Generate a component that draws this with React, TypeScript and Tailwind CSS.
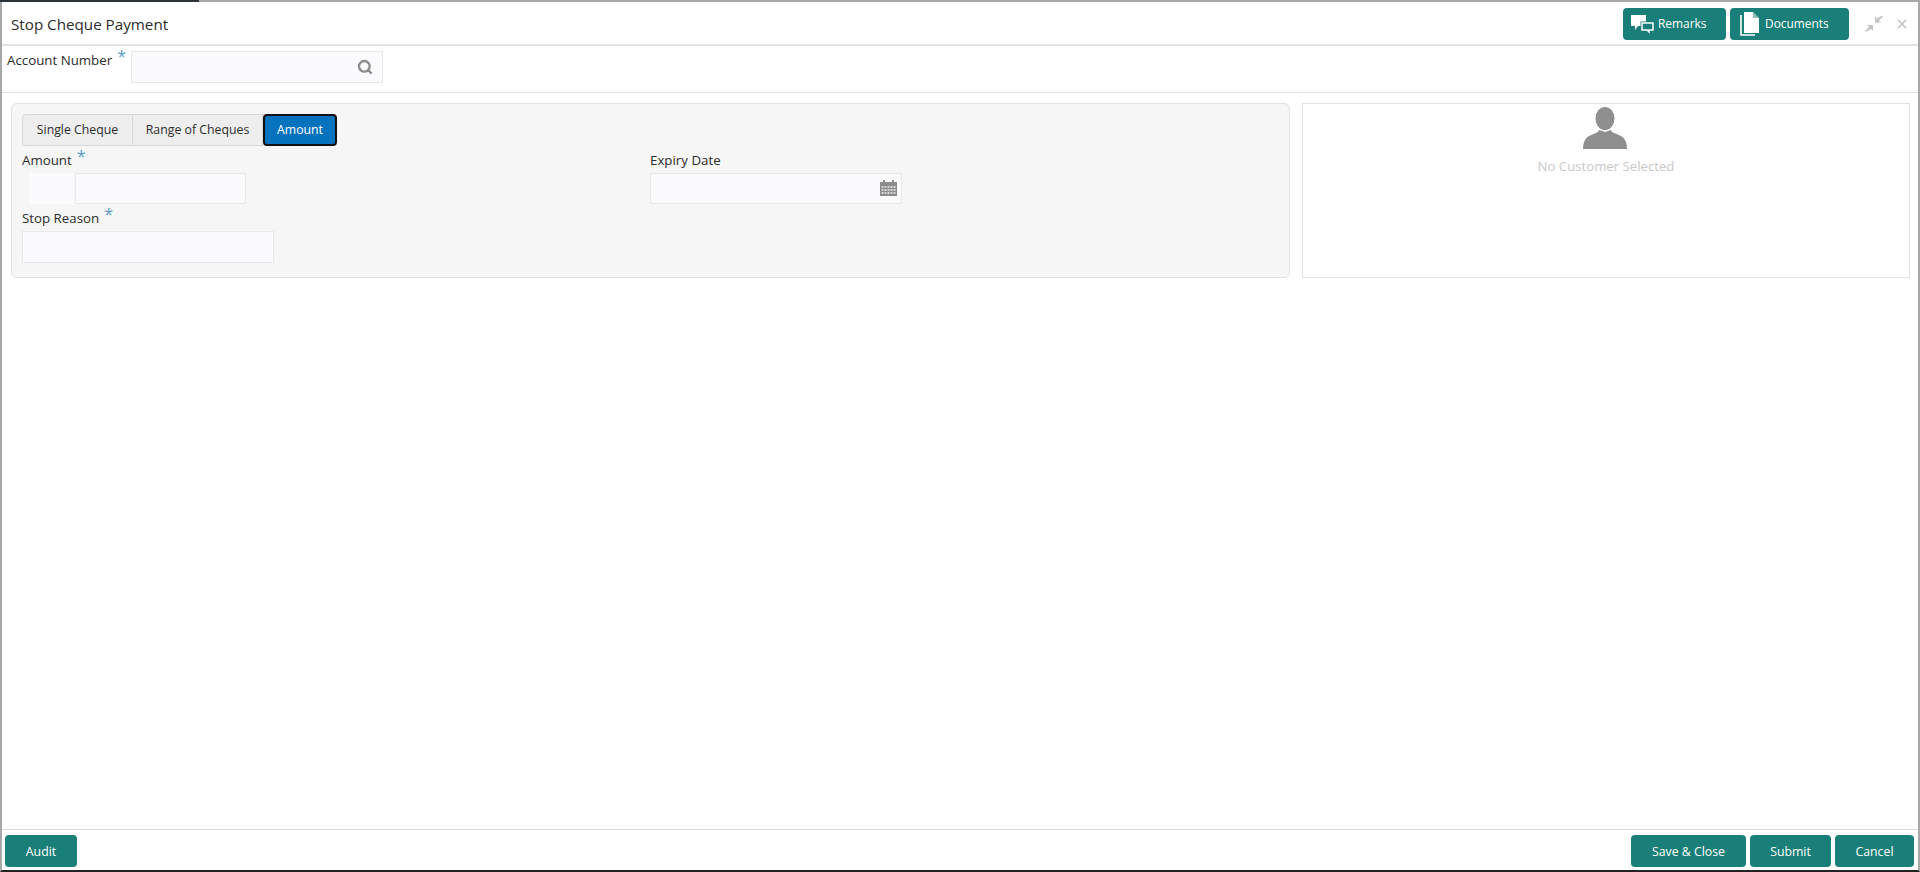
import { Search, X } from "lucide-react";

const font = { fontFamily: '"Open Sans", "Noto Sans", sans-serif' };

function RemarksIcon() {
  return (
    <svg width="24" height="20" viewBox="0 0 24 20" fill="none">
      <path d="M0 1h15v11H7l-3 4v-4H0z" fill="#fff" />
      <path d="M9.5 7.5h14v10h-4v2.5l-3-2.5h-7z" fill="#1a7f78" />
      <path d="M11 9h11v7h-4v2l-2-2h-5z" stroke="#fff" strokeWidth="1.5" />
    </svg>
  );
}

function DocumentsIcon() {
  return (
    <svg width="19" height="24" viewBox="0 0 19 24" fill="none">
      <path d="M4 0h9l6 6v15H4z" fill="#fff" />
      <path d="M13 0v6h6z" fill="#1a7f78" opacity="0.5" />
      <path d="M1 3v20h14" stroke="#fff" strokeWidth="1.6" />
    </svg>
  );
}

function CompressIcon() {
  return (
    <svg width="18" height="18" viewBox="0 0 18 18" fill="#c4c4c4">
      <path d="M17 0.5l1 1-4 4 2 2h-6v-6l2 2z" />
      <path d="M0.5 17l-0.5-1 4-4-2-2h6v6l-2-2z" />
    </svg>
  );
}

function CalendarIcon() {
  return (
    <svg width="17" height="16" viewBox="0 0 17 16" fill="#8c8c8c">
      <path d="M3 0h2v2h7V0h2v2h3v14H0V2h3z" />
      <path d="M1.5 6h2v2h-2zM4.5 6h2v2h-2zM7.5 6h2v2h-2zM10.5 6h2v2h-2zM13.5 6h2v2h-2zM1.5 9h2v2h-2zM4.5 9h2v2h-2zM7.5 9h2v2h-2zM10.5 9h2v2h-2zM13.5 9h2v2h-2zM1.5 12h2v2h-2zM4.5 12h2v2h-2zM7.5 12h2v2h-2zM10.5 12h2v2h-2zM13.5 12h2v2h-2z" fill="#d4d4d4" />
    </svg>
  );
}

function PersonIcon() {
  return (
    <svg className="-ml-[2px]" width="44" height="42" viewBox="0 0 44 42" fill="#8f8f8f">
      <ellipse cx="22" cy="11.5" rx="9.5" ry="11.5" />
      <path d="M16 23l6 2 6-2 1 2 9 4c4 2 6 7 6 13H0c0-6 2-11 6-13l9-4z" />
    </svg>
  );
}

function FieldLabel({ text, required }: { text: string; required?: boolean }) {
  return (
    <div className="flex h-[20px] items-center whitespace-nowrap text-[13.3px] leading-[20px] text-[#2c2c2c]">
      <span>{text}</span>
      {required && <span className="relative -top-[4px] ml-[5px] text-[16px] leading-[14px] text-[#5a9bc4]">*</span>}
    </div>
  );
}

function FooterButton({ label, width }: { label: string; width: string }) {
  return (
    <button className={`h-[32px] ${width} rounded-[4px] bg-[#1a7f78] pt-[2px] text-[12.3px] text-white`}>
      {label}
    </button>
  );
}

export default function App() {
  return (
    <div
      className="flex h-[872px] w-[1920px] flex-col overflow-hidden border-2 border-t-[#a8a8a8] border-r-[#a8a8a8] border-b-[#222] border-l-[#a8a8a8] bg-white"
      style={font}
    >
      <div className="absolute top-0 left-0 h-[2px] w-[199px] bg-[#2d3338]" />

      {/* Header */}
      <div className="flex h-[44px] shrink-0 items-center justify-between border-b-2 border-[#e2e2e2] pt-[2px] pr-[9px] pl-[9px]">
        <h1 className="text-[15.2px] font-normal text-[#2c2c2c]">Stop Cheque Payment</h1>
        <div className="flex items-center">
          <button className="flex h-[32px] w-[103px] items-center gap-[3px] rounded-[4px] bg-[#1a7f78] pl-[8px] text-[11.9px] text-white">
            <RemarksIcon />
            Remarks
          </button>
          <button className="ml-[4px] flex h-[32px] w-[119px] items-center gap-[6px] rounded-[4px] bg-[#1a7f78] pl-[10px] text-[11.9px] text-white">
            <DocumentsIcon />
            Documents
          </button>
          <div className="ml-[16px]">
            <CompressIcon />
          </div>
          <X className="ml-[12px] h-[14px] w-[14px] text-[#c4c4c4]" strokeWidth={3} />
        </div>
      </div>

      {/* Account number */}
      <div className="flex h-[47px] shrink-0 items-start border-b border-[#e2e2e2] pl-[5px]">
        <div className="w-[124px] pt-[4px]">
          <FieldLabel text="Account Number" required />
        </div>
        <div className="mt-[5px] flex h-[32px] w-[252px] items-center justify-end border border-[#e8e8e8] bg-[#fbfbfd] pr-[9px]">
          <Search className="h-[16px] w-[16px] text-[#8c8c8c]" strokeWidth={3.5} />
        </div>
      </div>

      {/* Content */}
      <div className="flex flex-1 gap-[12px] pt-[10px] pl-[9px]">
        <div className="h-[175px] w-[1279px] rounded-[6px] border border-[#e2e2e2] bg-[#f6f6f6] px-[10px] pt-[10px]">
          <div className="flex h-[32px] text-[12.3px] text-[#2c2c2c]">
            <button className="w-[111px] rounded-l-[4px] border border-[#d8d8d8] bg-[#eeeeee]">Single Cheque</button>
            <button className="w-[130px] border-y border-r border-[#d8d8d8] bg-[#eeeeee]">Range of Cheques</button>
            <button className="w-[74px] rounded-[4px] border-2 border-[#111] bg-[#0572bd] text-white">Amount</button>
          </div>
          <div className="flex">
            <div className="w-[628px]">
              <div className="pt-[4px] pb-[3px]">
                <FieldLabel text="Amount" required />
              </div>
              <div className="flex h-[31px]">
                <div className="ml-[8px] w-[44px] bg-[#fbfbfd]" />
                <div className="ml-[1px] w-[171px] border border-[#e8e8e8] bg-[#fbfbfd]" />
              </div>
              <div className="pt-[4px] pb-[3px]">
                <FieldLabel text="Stop Reason" required />
              </div>
              <div className="h-[32px] w-[252px] border border-[#e8e8e8] bg-[#fbfbfd]" />
            </div>
            <div>
              <div className="pt-[4px] pb-[3px]">
                <FieldLabel text="Expiry Date" />
              </div>
              <div className="flex h-[31px] w-[252px] items-center justify-end border border-[#e8e8e8] bg-[#fbfbfd] pr-[4px] pb-[2px]">
                <CalendarIcon />
              </div>
            </div>
          </div>
        </div>
        <div className="flex h-[175px] w-[608px] flex-col items-center border border-[#e2e2e2] bg-white pt-[3px]">
          <PersonIcon />
          <div className="mt-[7px] text-[13.2px] leading-[20px] text-[#c8c8c8]">No Customer Selected</div>
        </div>
      </div>

      {/* Footer */}
      <div className="flex h-[41px] shrink-0 items-start justify-between border-t border-[#dcdcdc] pt-[5px] pr-[4px] pl-[3px]">
        <FooterButton label="Audit" width="w-[72px]" />
        <div className="flex gap-[4px]">
          <FooterButton label="Save & Close" width="w-[115px]" />
          <FooterButton label="Submit" width="w-[81px]" />
          <FooterButton label="Cancel" width="w-[79px]" />
        </div>
      </div>
    </div>
  );
}
